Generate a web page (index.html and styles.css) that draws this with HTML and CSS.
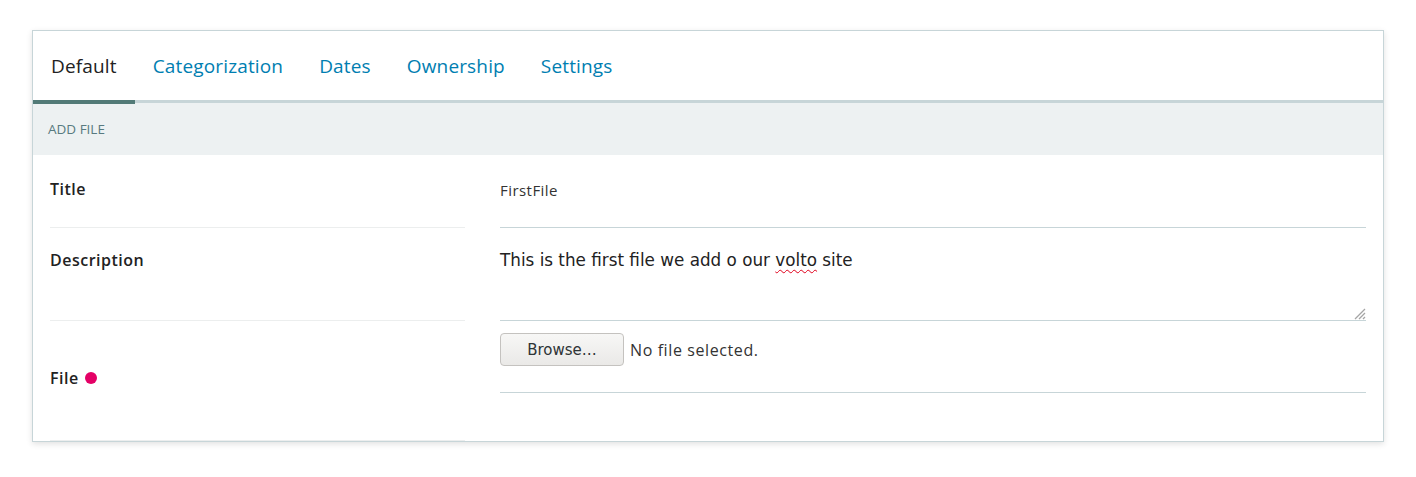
FILE: index.html
```html
<!DOCTYPE html>
<html lang="en">
<head>
<meta charset="utf-8">
<title>Add File</title>
<link rel="stylesheet" href="styles.css">
</head>
<body>
<div class="page">
  <div class="card">
    <nav class="tabs">
      <a class="tab active">Default</a>
      <a class="tab">Categorization</a>
      <a class="tab">Dates</a>
      <a class="tab">Ownership</a>
      <a class="tab">Settings</a>
    </nav>
    <div class="section-head">ADD FILE</div>
    <div class="form">
      <div class="row row-title">
        <div class="label-cell"><span class="label">Title</span></div>
        <div class="field-cell"><span class="input-text">FirstFile</span></div>
      </div>
      <div class="row row-desc">
        <div class="label-cell"><span class="label">Description</span></div>
        <div class="field-cell textarea">
          <span class="area-text">This is the first file we add o our <span class="misspelled">volto</span> site</span>
          <svg class="grip" width="14" height="14" viewBox="0 0 14 14"><path d="M13 3 L3 13 M13 7 L7 13 M13 11 L11 13" stroke="#a5a5a5" stroke-width="1.3" fill="none"/></svg>
        </div>
      </div>
      <div class="row row-file">
        <div class="label-cell"><span class="label">File</span><span class="required"></span></div>
        <div class="field-cell file-field">
          <button class="browse" type="button">Browse…</button>
          <span class="nofile">No file selected.</span>
        </div>
      </div>
    </div>
  </div>
</div>
</body>
</html>
```

FILE: styles.css
```css
html, body {
  margin: 0;
  padding: 0;
  background: #ffffff;
}
body {
  font-family: "Open Sans", "Liberation Sans", sans-serif;
  color: #222;
}
.page {
  padding: 30px 32px;
}
.card {
  border: 1px solid #c7d5d8;
  background: #fff;
  box-shadow: 0 2px 6px rgba(0, 0, 0, 0.12);
}
.tabs {
  display: flex;
  height: 69px;
  border-bottom: 3px solid #c7d5d8;
  align-items: stretch;
}
.tab {
  display: flex;
  align-items: center;
  padding: 0 18px;
  font-size: 19px;
  letter-spacing: 0.15px;
  color: #007eb1;
  cursor: pointer;
  margin-bottom: -3px;
  border-bottom: 4px solid transparent;
  padding-top: 1px;
}
.tab.active {
  color: #222;
  border-bottom-color: #527a77;
  margin-bottom: -4px;
}
.section-head {
  height: 52px;
  background: #edf1f2;
  display: flex;
  align-items: center;
  padding-left: 15px;
  font-size: 13.5px;
  color: #587a80;
}
.form {
  padding: 0 17px;
}
.row {
  display: grid;
  grid-template-columns: 415px 1fr;
  column-gap: 35px;
  align-items: start;
}
.label-cell {
  border-bottom: 1px solid #eceeee;
  display: flex;
  align-items: center;
}
.label {
  font-size: 16px;
  font-weight: 600;
  letter-spacing: 0.5px;
  line-height: 20px;
  color: #222;
}
.field-cell {
  border-bottom: 1px solid #c7d5d8;
  position: relative;
}
.row-title .label-cell { padding: 24px 0 28px; }
.row-title .field-cell { padding: 25px 0 27px; }
.input-text {
  display: block;
  font-size: 15px;
  font-weight: 400;
  letter-spacing: 0.45px;
  line-height: 20px;
  color: #333;
}
.row-desc .label-cell { padding: 22px 0 50px; }
.row-desc .field-cell { padding: 22px 0 50px; }
.area-text {
  display: block;
  font-family: "DejaVu Sans", "Noto Sans", sans-serif;
  font-size: 16.8px;
  line-height: 20px;
  color: #222;
}
.misspelled {
  text-decoration: underline wavy #e0001a;
  text-decoration-thickness: 1px;
  text-underline-offset: 3px;
}
.grip {
  position: absolute;
  right: 0;
  bottom: 0;
}
.row-file .label-cell { padding: 47px 0 52px; }
.required {
  display: inline-block;
  width: 12px;
  height: 12px;
  border-radius: 50%;
  background: #e40166;
  margin-left: 6px;
}
.file-field {
  display: flex;
  align-items: center;
  padding: 12px 0 26px;
}
.browse {
  width: 124px;
  height: 33px;
  border: 1px solid #c4c2bf;
  border-radius: 4px;
  background: linear-gradient(#f7f7f6, #eae9e7);
  font-family: "DejaVu Sans", "Noto Sans", sans-serif;
  font-size: 15px;
  color: #2e3436;
  padding: 0;
}
.nofile {
  margin-left: 6px;
  font-size: 16px;
  letter-spacing: 0.6px;
  color: #333;
}
```
